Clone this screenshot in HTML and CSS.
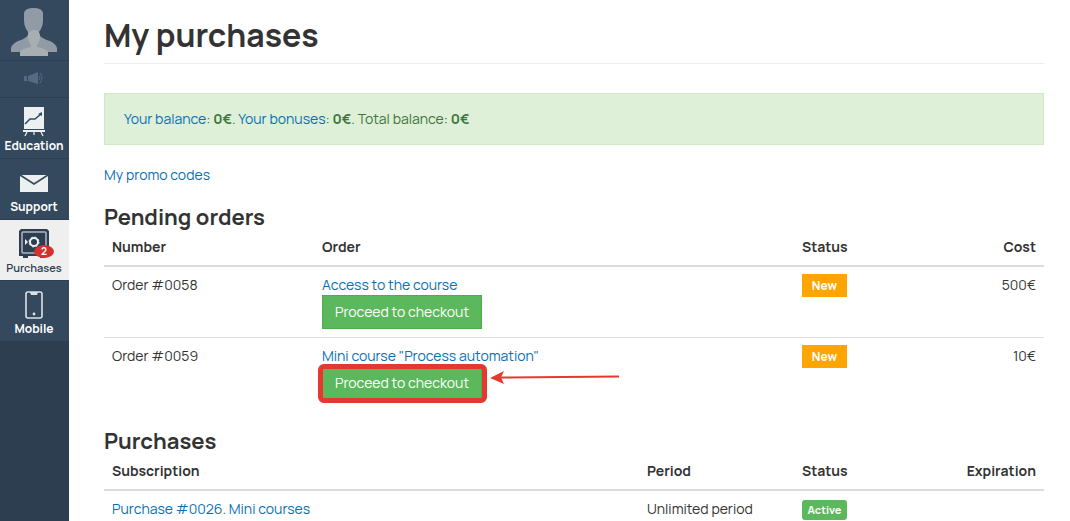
FILE: index.html
```html
<!DOCTYPE html>
<html lang="en">
<head>
<meta charset="utf-8">
<title>My purchases</title>
<link rel="stylesheet" href="styles.css">
</head>
<body>
<div class="app">
  <nav class="sidebar" aria-label="Main">
    <a class="item item-profile" href="#" aria-label="Profile">
      <svg width="48" height="50" viewBox="0 0 48 50" aria-hidden="true">
        <path fill="#919ba5" d="M14 5Q15 0 23.500 0Q32 0 33 5V13L32.500 17Q31 22 29 24V27Q33 31 40 33Q46 36 47 40V44H1V40Q2 36 8 33Q15 31 18 27V24Q16 22 14.500 17L14 13Z"/>
        <path fill="#a9aeb3" d="M24 22Q30 22 30 28Q30 34 27 37V39Q37 41 38 44V48H10V44Q11 41 21 39V37Q18 34 18 28Q18 22 24 22Z"/>
      </svg>
    </a>
    <a class="item item-news" href="#" aria-label="Announcements">
      <svg width="20" height="14" viewBox="0 0 20 14" aria-hidden="true">
        <path fill="#536b84" d="M0 5H3V10H0ZM4 5L14 1V13L4 10Z"/>
        <path fill="none" stroke="#536b84" d="M15 5Q17 7 15 9M16 2Q20 7 16 12"/>
      </svg>
    </a>
    <a class="item" href="#">
      <svg class="icon" width="24" height="32" viewBox="0 0 24 32" aria-hidden="true">
        <path fill="#ecf0f1" d="M2 2H22V24H2ZM1 25H23V27H1Z"/>
        <path fill="none" stroke="#ecf0f1" stroke-width="1.2" d="M5 27L3 31M12 27V30M19 27L21 31"/>
        <path fill="none" stroke="#34495e" stroke-width="1.5" d="M3 19L8 14L13 14L19 9"/>
        <path fill="#34495e" d="M16 9L20 7V11Z"/>
      </svg>
      <span>Education</span>
    </a>
    <a class="item" href="#">
      <svg class="icon" width="30" height="32" viewBox="0 0 30 32" aria-hidden="true">
        <path fill="#ecf0f1" d="M1 9H29V26H1Z"/>
        <path fill="none" stroke="#34495e" stroke-width="1.6" d="M1 9L15 18L29 9"/>
      </svg>
      <span>Support</span>
    </a>
    <a class="item item-active" href="#">
      <svg class="icon" width="30" height="32" viewBox="0 0 30 32" aria-hidden="true">
        <path fill="#2c3e50" d="M2 2H28L30 4V29H26V31H21V29H9V31H4V29H0V4Z"/>
        <rect x="3" y="5" width="24" height="21" rx="1" fill="none" stroke="#aeb8c1" stroke-width="1.5"/>
        <circle cx="15" cy="15" r="4" fill="none" stroke="#ecf0f1" stroke-width="2"/>
        <circle cx="15" cy="15" r="5" fill="none" stroke="#ecf0f1" stroke-width="1" stroke-dasharray="2 1.93"/>
        <path fill="#ecf0f1" d="M6 12L9 15L6 18Z"/>
      </svg>
      <span class="badge">2</span>
      <span>Purchases</span>
    </a>
    <a class="item" href="#">
      <svg class="icon" width="20" height="32" viewBox="0 0 20 32" aria-hidden="true">
        <rect x="2" y="4" width="16" height="26" rx="2" fill="none" stroke="#dce1e5" stroke-width="1.6"/>
        <path fill="#dce1e5" d="M6 4H14L13 7H7Z"/>
        <circle cx="10" cy="26" r="1.4" fill="#dce1e5"/>
      </svg>
      <span>Mobile</span>
    </a>
  </nav>
  <main class="content">
    <h1>My purchases</h1>
    <div class="balance"><a href="#">Your balance</a>: <b>0€</b>. <a href="#">Your bonuses</a>: <b>0€</b>. Total balance: <b>0€</b></div>
    <a class="promo" href="#">My promo codes</a>
    <h2>Pending orders</h2>
    <table>
      <colgroup><col class="col-number"><col class="col-order"><col class="col-status"><col></colgroup>
      <thead>
        <tr><th>Number</th><th>Order</th><th>Status</th><th class="end">Cost</th></tr>
      </thead>
      <tbody>
        <tr>
          <td>Order #0058</td>
          <td><a class="order-link" href="#">Access to the course</a><button class="checkout" type="button">Proceed to checkout</button></td>
          <td><span class="status">New</span></td>
          <td class="end">500€</td>
        </tr>
        <tr>
          <td>Order #0059</td>
          <td><a class="order-link" href="#">Mini course "Process automation"</a><span class="callout"><button class="checkout" type="button">Proceed to checkout</button><svg class="arrow" width="130" height="14" viewBox="0 0 130 14" aria-hidden="true"><path fill="none" stroke="#e53930" stroke-width="2" d="M10 7.500L129 6.500"/><path fill="#e53930" d="M0 8L14 1L11 7.500L14 14Z"/></svg></span></td>
          <td><span class="status">New</span></td>
          <td class="end">10€</td>
        </tr>
      </tbody>
    </table>
    <h2>Purchases</h2>
    <table>
      <colgroup><col class="col-subscription"><col class="col-period"><col class="col-status"><col></colgroup>
      <thead>
        <tr><th>Subscription</th><th>Period</th><th>Status</th><th class="end">Expiration</th></tr>
      </thead>
      <tbody>
        <tr>
          <td><a href="#">Purchase #0026. Mini courses</a></td>
          <td>Unlimited period</td>
          <td><span class="status status-active">Active</span></td>
          <td></td>
        </tr>
      </tbody>
    </table>
  </main>
</div>
</body>
</html>
```
FILE: styles.css
```css
* { box-sizing: border-box; }
html { overflow: hidden; }
body {
  margin: 0;
  font: 14px/20px Manrope, Inter, "Open Sans", sans-serif;
  color: #333;
  background: #fff;
}
a { color: #0a6fb3; text-decoration: none; }
.app { display: flex; height: 100vh; }
.sidebar { flex: 0 0 69px; background: #2c3e50; }
.item {
  position: relative;
  display: flex;
  flex-direction: column;
  align-items: center;
  height: 61px;
  padding: 7px 1px 0 0;
  border-bottom: 1px solid #2c3e50;
  background: #34495e;
  color: #fff;
  font-size: 12px;
  font-weight: 700;
  line-height: 16px;
}
.item .icon { flex: none; margin-bottom: 1px; }
.item-profile { padding-top: 8px; }
.item-news { height: 37px; padding-top: 10px; }
.item-active {
  background: #efefef;
  color: #2c3e50;
  font-size: 11px;
  font-weight: 600;
}
.badge {
  position: absolute;
  top: 25px;
  left: 34px;
  width: 20px;
  height: 13px;
  border-radius: 50%;
  background: #d3302f;
  color: #fff;
  font-size: 10px;
  font-weight: 700;
  line-height: 13px;
  text-align: center;
}
.content { flex: 1; min-width: 0; padding: 15px 26px 0 35px; }
h1 {
  margin: 0 0 29px;
  padding-bottom: 8px;
  border-bottom: 1px solid #eee;
  font-size: 32px;
  font-weight: 700;
  line-height: 40px;
}
.balance {
  margin-bottom: 20px;
  padding: 15px 19px;
  border: 1px solid #d0e9c6;
  background: #dff0d8;
  color: #3c763d;
}
.promo { display: block; }
h2 {
  margin: 20px 0 0;
  font-size: 22px;
  font-weight: 700;
  line-height: 24px;
}
table {
  width: 100%;
  margin-bottom: 21px;
  border-collapse: separate;
  border-spacing: 0;
  table-layout: fixed;
}
.col-number { width: 22.34%; }
.col-order { width: 51.06%; }
.col-subscription { width: 56.91%; }
.col-period { width: 16.49%; }
.col-status { width: 13.3%; }
th, td { padding: 8px; text-align: left; vertical-align: top; }
th { border-bottom: 2px solid #ddd; font-weight: 700; }
tr + tr td { border-top: 1px solid #ddd; }
.end { text-align: right; }
.order-link { display: block; }
.checkout {
  display: block;
  width: 160px;
  height: 34px;
  padding: 0;
  border: 1px solid #4cae4c;
  background: #5cb85c;
  color: #fff;
  font: inherit;
}
.callout { position: relative; display: block; width: 160px; }
.callout::before {
  content: "";
  position: absolute;
  inset: -2px -5px -3px -4px;
  border: 5px solid #e53930;
  border-radius: 6px;
  pointer-events: none;
}
.arrow { position: absolute; left: 168px; top: 4px; }
.status {
  display: block;
  width: 45px;
  margin-top: -1px;
  background: #ffa500;
  color: #fff;
  font-size: 12px;
  font-weight: 700;
  line-height: 23px;
  text-align: center;
}
.status-active {
  margin-top: 1px;
  border-radius: 3px;
  background: #5cb85c;
  font-size: 11px;
  line-height: 20px;
}
```
